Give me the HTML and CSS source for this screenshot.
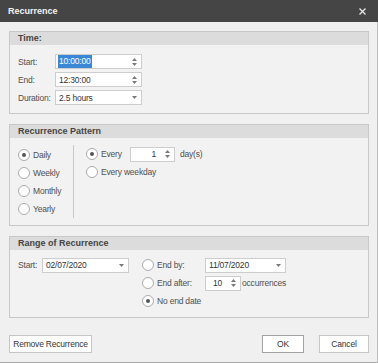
FILE: index.html
```html
<!DOCTYPE html>
<html>
<head>
<meta charset="utf-8">
<link rel="stylesheet" href="styles.css">
</head>
<body>
<div class="dialog">
  <div class="titlebar">
    <span class="title">Recurrence</span>
    <svg class="close" width="7" height="7" viewBox="0 0 7 7"><path d="M0.5 0.5L6.5 6.5M6.5 0.5L0.5 6.5" stroke="#e2e2e2" stroke-width="1.4"/></svg>
  </div>
  <div class="content">
    <section class="group">
      <div class="group-head">Time:</div>
      <div class="time-body">
        <span class="lbl">Start:</span>
        <div class="input"><span class="val"><span class="sel">10:00:00</span></span><svg class="spin" width="5" height="10" viewBox="0 0 5 10"><path d="M2.5 1L5 4H0z M0 6h5L2.5 9z" fill="#7a7a7a"/></svg></div>
        <span class="lbl">End:</span>
        <div class="input"><span class="val">12:30:00</span><svg class="spin" width="5" height="10" viewBox="0 0 5 10"><path d="M2.5 1L5 4H0z M0 6h5L2.5 9z" fill="#7a7a7a"/></svg></div>
        <span class="lbl">Duration:</span>
        <div class="input"><span class="val">2.5 hours</span><svg class="drop" width="5" height="3" viewBox="0 0 5 3"><path d="M0 0h5L2.5 3z" fill="#7a7a7a"/></svg></div>
      </div>
    </section>

    <section class="group">
      <div class="group-head">Recurrence Pattern</div>
      <div class="pattern-body">
        <div class="freq">
          <div class="radio-row"><span class="radio on"></span><span>Daily</span></div>
          <div class="radio-row"><span class="radio"></span><span>Weekly</span></div>
          <div class="radio-row"><span class="radio"></span><span>Monthly</span></div>
          <div class="radio-row"><span class="radio"></span><span>Yearly</span></div>
        </div>
        <div class="sep"></div>
        <div class="pattern-right">
          <div class="radio-row"><span class="radio on"></span><span class="every">Every</span><div class="input num w45"><span class="val">1</span><svg class="spin" width="5" height="10" viewBox="0 0 5 10"><path d="M2.5 1L5 4H0z M0 6h5L2.5 9z" fill="#7a7a7a"/></svg></div><span class="after">day(s)</span></div>
          <div class="radio-row"><span class="radio"></span><span>Every weekday</span></div>
        </div>
      </div>
    </section>

    <section class="group last">
      <div class="group-head">Range of Recurrence</div>
      <div class="range-body">
        <span class="lbl">Start:</span>
        <div class="input w87"><span class="val">02/07/2020</span><svg class="drop" width="5" height="3" viewBox="0 0 5 3"><path d="M0 0h5L2.5 3z" fill="#7a7a7a"/></svg></div>
        <div class="radio-row"><span class="radio"></span><span>End by:</span></div>
        <div class="input w81"><span class="val">11/07/2020</span><svg class="drop" width="5" height="3" viewBox="0 0 5 3"><path d="M0 0h5L2.5 3z" fill="#7a7a7a"/></svg></div>
        <div class="radio-row c3"><span class="radio"></span><span>End after:</span></div>
        <div class="occ"><div class="input num2 w36"><span class="val">10</span><svg class="spin" width="5" height="10" viewBox="0 0 5 10"><path d="M2.5 1L5 4H0z M0 6h5L2.5 9z" fill="#7a7a7a"/></svg></div><span class="after">occurrences</span></div>
        <div class="radio-row c3 span2"><span class="radio on"></span><span>No end date</span></div>
      </div>
    </section>

    <div class="buttons">
      <button class="btn remove">Remove Recurrence</button>
      <button class="btn ok">OK</button>
      <button class="btn cancel">Cancel</button>
    </div>
  </div>
</div>
</body>
</html>
```

FILE: styles.css
```css
* { box-sizing: border-box; margin: 0; padding: 0; }
html, body { width: 378px; height: 363px; overflow: hidden; background: #f0f0f0; }
body {
  font-family: "Liberation Sans", Arial, sans-serif;
  font-size: 8.5px;
  letter-spacing: -0.2px;
  color: #505050;
}
.dialog { width: 378px; height: 363px; display: flex; flex-direction: column; }
.titlebar {
  height: 22px; flex: none; background: #454545; color: #f2f2f2;
  display: flex; align-items: center; justify-content: space-between;
  padding: 0 12px 0 8px; font-weight: bold; font-size: 9px; letter-spacing: 0;
}
.close { display: block; }
.content {
  flex: 1; display: flex; flex-direction: column;
  padding: 9px 8px 0 9px;
  border-right: 1px solid #bdbdbd; border-bottom: 1px solid #a8a8a8;
}
.group { border: 1px solid #c8c8c8; background: #f2f2f2; margin-bottom: 10px; }
.group.last { margin-bottom: 0; }
.group-head {
  height: 13px; line-height: 13px; background: #dcdcdc; color: #444;
  font-weight: bold; font-size: 9px; letter-spacing: 0; padding-left: 8px;
}
.time-body {
  display: grid; grid-template-columns: 37px 87px; row-gap: 3px;
  padding: 9px 8px 8px; align-items: center;
}
.input {
  height: 15px; background: #fff; border: 1px solid #cdcdcd; color: #333;
  display: flex; align-items: center; padding: 0 3px 0 3px;
}
.input .val { flex: 1; white-space: nowrap; }
.sel { background: #3a87d6; color: #fff; padding: 0 1px; line-height: 13px; display: inline-block; margin-left: -1px; }
.spin, .drop { flex: none; display: block; margin-right: 1px; }
.num .val { text-align: right; padding-right: 9px; }
.num2 .val { text-align: right; padding-right: 9px; }
.w45 { width: 45px; }
.w87 { width: 87px; }
.w81 { width: 81px; }
.w36 { width: 36px; }

.pattern-body { display: flex; padding: 7px 0 7px 8px; }
.freq { width: 55px; padding-top: 1px; }
.sep { width: 1px; background: #c8c8c8; }
.pattern-right { padding-left: 12px; }
.radio-row { height: 18px; display: flex; align-items: center; gap: 3px; white-space: nowrap; }
.radio {
  width: 12px; height: 12px; flex: none; border-radius: 50%;
  border: 1px solid #ababab; background: #fff;
  display: flex; align-items: center; justify-content: center;
}
.radio.on::after { content: ""; width: 4px; height: 4px; border-radius: 50%; background: #555; }
.every { width: 26px; }
.after { margin-left: 2px; }

.range-body {
  display: grid; grid-template-columns: 24px 100px 63px auto; grid-auto-rows: 18px;
  padding: 6px 8px 7px; align-items: center;
}
.c3 { grid-column: 3; }
.span2 { grid-column: 3 / span 2; }
.occ { display: flex; align-items: center; }
.occ .after { margin-left: 1px; }

.buttons { display: flex; margin-top: 17px; }
.btn {
  height: 18px; background: #fff; border: 1px solid #c6c6c6; color: #333;
  font: inherit; letter-spacing: -0.2px;
}
.remove { width: 83px; }
.ok { width: 42px; margin-left: auto; border-color: #a3a3a3; }
.cancel { width: 50px; margin-left: 15px; }
```
